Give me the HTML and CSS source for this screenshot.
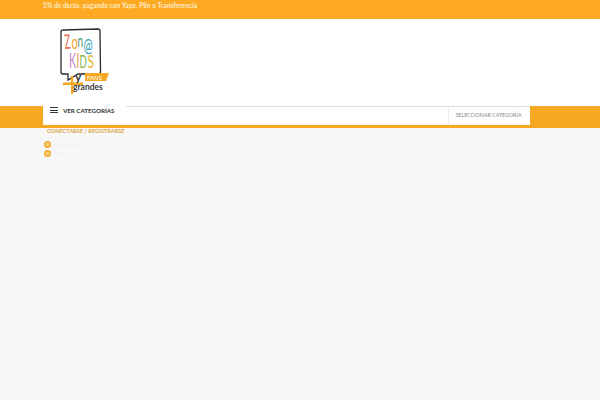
FILE: index.html
```html
<!DOCTYPE html>
<html lang="es">
<head>
<meta charset="utf-8">
<title>Zona Kids</title>
<link rel="stylesheet" href="styles.css">
</head>
<body>
<div class="topbar"><p class="promo">5% de dscto. pagando con Yape, Plin o Transferencia</p></div>
<header class="masthead">
  <svg class="logo" width="52" height="68" viewBox="0 0 52 68" role="img" aria-label="Zona Kids y fans + grandes">
    <path d="M5 2 L40 1 Q42 1 42 3 L42.500 44 Q42.500 46 40 46 L20 46 L10 52 L10 46 L5 46 Q3 46 3 44 L3 4 Q3 2 5 2 Z" fill="#fff" stroke="#2b2b2b" stroke-width="1.300"/>
    <g font-family="Lato, sans-serif" font-size="10">
      <text transform="translate(7 21) rotate(-5) scale(1 2)" fill="#ef6a55">Z</text>
      <text transform="translate(13.500 21) scale(1.100 2)" fill="#f3a21f">o</text>
      <text transform="translate(19.500 19) scale(1 1.800)" fill="#4c9c6b">n</text>
      <text transform="translate(25.500 24) scale(1.100 1.900)" fill="#29a4b5">@</text>
      <text transform="translate(11 40) scale(1.100 2.200)" fill="#c58ac8">K</text>
      <text transform="translate(18.500 40) scale(1 2.100)" fill="#f0893c">I</text>
      <text transform="translate(21.500 40) scale(.950 1.800)" fill="#7cb84b">D</text>
      <text transform="translate(29.500 40) scale(1.200 1.800)" fill="#e4b62b">S</text>
    </g>
    <path d="M27 45 H51 L48 53 H27 Z" fill="#f7a823"/>
    <rect x="5" y="54.500" width="20" height="2.500" fill="#f7a823"/>
    <rect x="13" y="48" width="2.200" height="18" fill="#f7a823"/>
    <text x="17" y="53" font-family="Lato, sans-serif" font-size="12" font-weight="700" fill="#333">y</text>
    <text x="29" y="51.500" font-family="Lato, sans-serif" font-size="6" fill="#fff">FANS</text>
    <text x="15" y="62" font-family="Lato, sans-serif" font-size="8.500" font-weight="700" fill="#3a3a3a">grandes</text>
  </svg>
</header>
<nav class="navband">
  <div class="catbox">
    <span class="burger"><i></i><i></i><i></i></span>
    <span class="catlabel">VER CATEGORÍAS</span>
  </div>
  <form class="search">
    <div class="field"></div>
    <div class="select">SELECCIONAR CATEGORÍA</div>
  </form>
</nav>
<main class="page">
  <p class="overline">Mi cuenta</p>
  <p class="account">CONECTARSE / REGISTRARSE</p>
  <ul class="bullets">
    <li><span class="dot"></span><span class="faint">Contacto</span></li>
    <li><span class="dot"></span><span class="faint">Blog</span></li>
  </ul>
</main>
</body>
</html>
```
FILE: styles.css
```css
html, body { margin: 0; height: 100%; }
body { background: #f7f7f7; font-family: Lato, sans-serif; overflow: hidden; }
.topbar { height: 19px; background: #fea921; padding: 1px 0 0 43px; display: flex; align-items: flex-start; box-sizing: border-box; }
.promo { margin: 0; font-size: 6.700px; line-height: 8px; font-weight: 700; color: #fdeccb; }
.masthead { height: 87px; background: #fff; padding: 9px 0 0 58px; box-sizing: border-box; }
.logo { display: block; }
.navband { height: 22px; background: #f7a823; position: relative; display: flex; padding: 0 70px 3px 43px; box-sizing: border-box; }
.catbox { position: absolute; left: 43px; top: -3px; width: 83px; height: 21px; background: #fff; display: flex; align-items: flex-start; gap: 5px; padding: 4px 0 0 7px; box-sizing: border-box; z-index: 1; }
.burger { display: flex; flex-direction: column; gap: 1.500px; width: 8px; }
.burger i { display: block; height: 1px; background: #333; }
.catlabel { font-size: 6.200px; line-height: 7px; font-weight: 700; color: #333; white-space: nowrap; }
.search { flex: 1; display: flex; background: #fff; border-top: 1px solid #ddd; }
.field { flex: 1; }
.select { width: 82px; border-left: 1px solid #eee; font-size: 5.300px; color: #888; display: flex; align-items: center; justify-content: center; padding: 0 2px 2px 0; box-sizing: border-box; }
.page { padding: 0 0 0 47px; margin-top: -3px; }
.overline { margin: 0; width: 29px; height: 3px; background: #f5c98a; overflow: hidden; font-size: 4px; line-height: 3px; color: #8a6a3a; }
.account { margin: -1px 0 0; font-size: 5.600px; font-weight: 700; color: #d9a548; line-height: 8px; }
.bullets { list-style: none; margin: 6px 0 0 -3px; padding: 0; display: flex; flex-direction: column; gap: 2px; }
.bullets li { height: 7px; display: flex; align-items: center; gap: 4px; }
.dot { width: 7px; height: 7px; border-radius: 50%; background: radial-gradient(circle, #f8cf7c 0 1.500px, #f2a727 2.500px); }
.faint { font-size: 6px; color: #f2f2f2; }
```
